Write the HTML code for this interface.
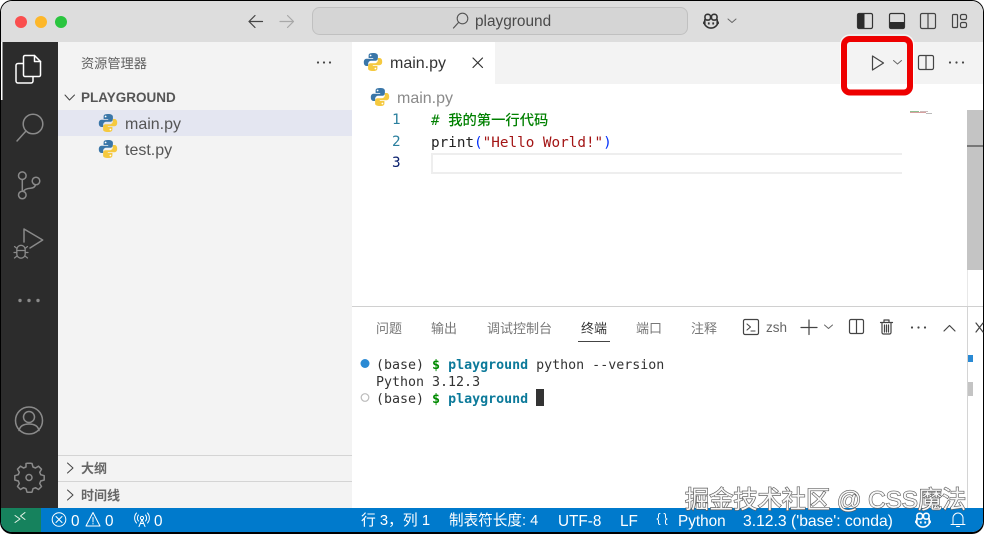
<!DOCTYPE html>
<html><head><meta charset="utf-8"><style>
*{box-sizing:border-box;margin:0;padding:0}
html,body{width:984px;height:534px;overflow:hidden;background:#fff}
body{position:relative;font-family:"Liberation Sans","Noto Sans CJK SC",sans-serif}
.a{position:absolute}
.t{position:absolute;white-space:nowrap;line-height:1}
svg{position:absolute;overflow:visible}
.m{font-family:"DejaVu Sans Mono","Noto Sans CJK SC",monospace}
.s{fill:none;stroke-linecap:round;stroke-linejoin:round}
</style></head><body>
<svg width="0" height="0" style="position:absolute"><defs>
<symbol id="py" viewBox="0 0 20 20">
<path fill="#3a76a8" d="M9.800 1C6 1 5.600 2.400 5.600 3.800V6h4.600v.8H3.600C2 6.800 .8 8 .8 10.300c0 2.400 1.100 3.700 2.700 3.700h1.700v-2.300c0-1.700 1.400-3 3-3h4.300c1.300 0 2.400-1.100 2.400-2.500V3.800C14.900 2 13.300 1 9.800 1Z"/>
<path fill="#f5c93f" d="M10.200 19c3.800 0 4.200-1.400 4.200-2.800V14H9.800v-.8h6.600c1.600 0 2.800-1.200 2.800-3.500 0-2.400-1.100-3.700-2.700-3.700h-1.700v2.300c0 1.700-1.400 3-3 3H7.500c-1.300 0-2.400 1.100-2.400 2.500v2.900C5.100 18 6.700 19 10.200 19Z"/>
<circle cx="7.600" cy="3.500" r=".9" fill="#fff"/><circle cx="12.400" cy="16.500" r=".9" fill="#fff"/>
</symbol>
<symbol id="cop" viewBox="0 0 18 18">
<rect x="2.200" y="1.500" width="6.300" height="6.500" rx="2.800" fill="none" stroke-width="1.800"/>
<rect x="9.500" y="1.500" width="6.300" height="6.500" rx="2.800" fill="none" stroke-width="1.800"/>
<path fill="none" stroke-width="1.800" d="M2 7v6c2 3 4.500 4 7 4s5-1 7-4V7M1 9.500v3M17 9.500v3"/>
<path fill="none" stroke-width="2" d="M6.500 10.500v2.500M11.500 10.500v2.500"/>
</symbol>
</defs></svg>

<!-- window -->
<div class="a" style="left:0;top:0;width:984px;height:534px;border-radius:12px;overflow:hidden;background:#000;">
 <div class="a" style="left:1px;top:1px;width:982px;height:531px;border-radius:11px;overflow:hidden;background:#fff">
  <div class="a" style="left:0;top:0;width:982px;height:41px;background:#dddddd"></div>
  <div class="a" style="left:0;top:41px;width:57px;height:467px;background:#2c2c2c"></div>
  <div class="a" style="left:57px;top:41px;width:294px;height:467px;background:#f3f3f3"></div>
  <div class="a" style="left:351px;top:41px;width:631px;height:42px;background:#f3f3f3"></div>
  <div class="a" style="left:351px;top:41px;width:143px;height:42px;background:#fff"></div>
  <div class="a" style="left:57px;top:109px;width:294px;height:26px;background:#e4e6f1"></div>
  <div class="a" style="left:57px;top:454px;width:294px;height:1px;background:#d4d4d4"></div>
  <div class="a" style="left:57px;top:480px;width:294px;height:1px;background:#d4d4d4"></div>
  <div class="a" style="left:351px;top:305px;width:631px;height:1px;background:#d0d0d0"></div>
  <!-- current line -->
  <div class="a" style="left:430px;top:152px;width:471px;height:21px;border:2px solid #eeeeee;border-right:0"></div>
  <!-- scrollbars -->
  <div class="a" style="left:966px;top:109px;width:16px;height:160px;background:#c4c4c4"></div>
  <div class="a" style="left:966px;top:144px;width:16px;height:2px;background:#777"></div>
  <div class="a" style="left:966px;top:269px;width:1px;height:36px;background:#e8e8e8"></div>
  <div class="a" style="left:966px;top:306px;width:1px;height:202px;background:#d4d4d4"></div>
  <div class="a" style="left:967px;top:354px;width:5px;height:7px;background:#2a8ad4"></div>
  <div class="a" style="left:967px;top:381px;width:5px;height:14px;background:#c4c4c4"></div>
  <!-- minimap -->
  <div class="a" style="left:909px;top:110px;width:9px;height:1px;background:#8fbf8f"></div>
  <div class="a" style="left:909px;top:111px;width:16px;height:1px;background:#d6a0a0"></div>
  <div class="a" style="left:919px;top:110px;width:8px;height:1px;background:#cbb"></div>
  <div class="a" style="left:925px;top:112px;width:6px;height:1px;background:#bbb"></div>
  <!-- status -->
  <div class="a" style="left:0;top:507px;width:982px;height:24px;background:#007acc"></div>
  <div class="a" style="left:0;top:507px;width:40px;height:24px;background:#16825d"></div>
 </div>
</div>

<!-- traffic lights -->
<div class="a" style="left:15px;top:16px;width:12px;height:12px;border-radius:50%;background:#fa4f4f"></div>
<div class="a" style="left:35px;top:16px;width:12px;height:12px;border-radius:50%;background:#fdb72a"></div>
<div class="a" style="left:55px;top:16px;width:12px;height:12px;border-radius:50%;background:#2ac53f"></div>

<svg style="left:0;top:0" width="984" height="534">
 <path class="s" stroke="#444" stroke-width="1.200" d="M249 21.500h13.500M255 15.500l-6 6 6 6"/>
 <path class="s" stroke="#a8a8a8" stroke-width="1.200" d="M280 21.500h13.500M287.500 15.500l6 6-6 6"/>
 <rect x="312.500" y="7.500" width="375" height="27" rx="7" fill="#d5d5d5" stroke="#c0c0c0"/>
 <circle cx="462.500" cy="18.500" r="5.300" fill="none" stroke="#555" stroke-width="1.100"/>
 <path class="s" stroke="#555" stroke-width="1.200" d="M458.500 22.500l-5 5.500"/>
 <use href="#cop" x="703" y="13" width="16" height="16" stroke="#333" fill="none"/>
 <path class="s" stroke="#666" d="M728 19l4 3.500 4-3.500"/>
 <rect x="857.500" y="13.500" width="15" height="15" rx="1.500" fill="none" stroke="#333" stroke-width="1.200"/>
 <path fill="#2b2b2b" d="M858 14h6.500v14H858z"/>
 <rect x="889.500" y="13.500" width="15" height="15" rx="1.500" fill="none" stroke="#333" stroke-width="1.200"/>
 <path fill="#2b2b2b" d="M890 22h14v6h-14z"/>
 <rect x="920.500" y="13.500" width="15" height="15" rx="1.500" fill="none" stroke="#444" stroke-width="1.200"/>
 <path stroke="#444" stroke-width="1.200" d="M928 13.500v15"/>
 <rect x="952.500" y="14.500" width="5" height="13" rx="1" fill="none" stroke="#444" stroke-width="1.200"/>
 <rect x="960.500" y="14.500" width="6" height="5" rx="1.500" fill="none" stroke="#444" stroke-width="1.200"/>
 <rect x="960.500" y="22.500" width="6" height="5" rx="1.500" fill="none" stroke="#444" stroke-width="1.200"/>

 <!-- activity: explorer -->
 <g class="s" stroke="#fff" stroke-width="1.500" fill="none">
  <path d="M24 63.500h-6a2 2 0 0 0-2 2v15.500a2 2 0 0 0 2 2h13a2 2 0 0 0 2-2v-4"/>
  <path d="M25 55.500h9.500l6 6v13.500a1.500 1.500 0 0 1-1.500 1.500H25a1.500 1.500 0 0 1-1.500-1.500V57a1.500 1.500 0 0 1 1.500-1.500Z" fill="#2c2c2c"/>
  <path d="M34.500 55.500v6h6"/>
 </g>
 <path fill="#fff" d="M1 42h1.500v58H1z"/>
 <g class="s" stroke="#8a8a8a" stroke-width="1.500" fill="none">
  <circle cx="33" cy="124" r="9.800"/>
  <path d="M26 131l-9 10"/>
  <!-- scm -->
  <circle cx="22.300" cy="175.700" r="3.800"/><circle cx="22.300" cy="195" r="3.800"/><circle cx="36" cy="181" r="3.800"/>
  <path d="M22.300 179.500v11.700M35.500 184.800c-.5 2.500-2.500 3.200-5 3.400-3 .2-5.800.6-7.200 3.200"/>
  <!-- debug -->
  <path d="M24 229v13M24 229l18.700 11-12.700 8"/>
  <path d="M16.800 249.500a4.200 4.200 0 0 1 8.400 0v4.500a4.200 4.200 0 0 1-8.400 0Z" stroke-width="1.300"/>
  <path d="M17 250.500h8M14.500 246.500l2.500 2M27.500 246.500l-2.500 2M14 252.500h3M28 252.500h-3M14.500 258l2.500-2M27.500 258l-2.500-2" stroke-width="1.200"/>
  <!-- account -->
  <circle cx="29" cy="420.500" r="13.500"/>
  <circle cx="29" cy="417" r="5.500"/>
  <path d="M19 430.500c1-4.500 4.500-6.500 10-6.500s9 2 10 6.500"/>
  <!-- gear -->
  <path d="M26 463.500l1-.2h4l1 .2 1 3.500 2.500 1 3-1.800 3 3-1.800 3 1 2.500 3.500 1v4.300l-3.500 1-1 2.500 1.800 3-3 3-3-1.800-2.500 1-1 3.500h-5l-1-3.500-2.500-1-3 1.800-3-3 1.800-3-1-2.500-3.500-1v-4.300l3.500-1 1-2.500-1.800-3 3-3 3 1.800 2.500-1Z"/>
  <circle cx="29" cy="477.500" r="3"/>
 </g>
 <g fill="#8a8a8a"><circle cx="20" cy="300.500" r="1.700"/><circle cx="29" cy="300.500" r="1.700"/><circle cx="38" cy="300.500" r="1.700"/></g>

 <!-- sidebar icons -->
 <g fill="#444"><circle cx="318" cy="62.500" r="1.100"/><circle cx="324" cy="62.500" r="1.100"/><circle cx="330" cy="62.500" r="1.100"/></g>
 <path class="s" stroke="#444" stroke-width="1" d="M65 95l4.500 5 5-5"/>
 <path class="s" stroke="#444" stroke-width="1" d="M67.500 463l5.500 5-5.500 5M67.500 490l5.500 5-5.500 5"/>
 <use href="#py" x="98" y="113" width="20" height="20"/>
 <use href="#py" x="98" y="139" width="20" height="20"/>
 <use href="#py" x="363" y="52" width="20" height="20"/>
 <use href="#py" x="370" y="87" width="20" height="20"/>
 <path class="s" stroke="#333" stroke-width="1.200" d="M473 58l9.500 9.500M482.500 58l-9.500 9.500"/>

 <!-- red box -->
 <rect x="840.500" y="35" width="73" height="62" rx="9" fill="none" stroke="#fff" stroke-width="1" opacity=".85"/>
 <rect x="844" y="39" width="66" height="53.500" rx="6" fill="none" stroke="#ee0000" stroke-width="6"/>
 <path class="s" stroke="#444" stroke-width="1.200" d="M872.500 56v14l11-7Z"/>
 <path class="s" stroke="#666" d="M893.500 60.500l4 3.500 4-3.500"/>
 <rect x="918.500" y="55.500" width="15" height="14" rx="1.500" fill="none" stroke="#444" stroke-width="1.200"/>
 <path stroke="#444" stroke-width="1.200" d="M926 55.500v14"/>
 <g fill="#444"><circle cx="950" cy="62.500" r="1.100"/><circle cx="956.500" cy="62.500" r="1.100"/><circle cx="963" cy="62.500" r="1.100"/></g>

 <path stroke="#444" d="M578 341.500h32"/>
 <rect x="743.500" y="319.500" width="15" height="15" rx="1.500" fill="none" stroke="#444" stroke-width="1.200"/>
 <path class="s" stroke="#444" stroke-width="1.100" d="M747 324l3.500 3-3.500 3M751 331h4"/>
 <path class="s" stroke="#444" stroke-width="1.200" d="M809 320v14.500M801 327.500h16"/>
 <path class="s" stroke="#666" d="M824.500 325l4 3.500 4-3.500"/>
 <rect x="849.500" y="319.500" width="14" height="14" rx="1.500" fill="none" stroke="#444" stroke-width="1.200"/>
 <path stroke="#444" stroke-width="1.200" d="M856.500 319.500v14"/>
 <path class="s" stroke="#444" stroke-width="1.200" fill="none" d="M880.500 322.500h12M882 322.500v10a1.500 1.500 0 0 0 1.500 1.500h6a1.500 1.500 0 0 0 1.500-1.500v-10M884 322v-2h5v2M884.500 325v7M886.500 325v7M888.500 325v7"/>
 <g fill="#444"><circle cx="912" cy="327.500" r="1.100"/><circle cx="918.500" cy="327.500" r="1.100"/><circle cx="925" cy="327.500" r="1.100"/></g>
 <path class="s" stroke="#444" stroke-width="1.200" d="M944 331l5.500-5.500 5.500 5.500"/>
 <path class="s" stroke="#444" stroke-width="1.200" d="M976 323l7 9M983 323l-7 9"/>
 <circle cx="365" cy="363.500" r="4.500" fill="#2a8ad4"/>
 <circle cx="365" cy="397.500" r="3.800" fill="none" stroke="#bbb" stroke-width="1.200"/>
 <rect x="536" y="389" width="8" height="17" fill="#333"/>

 <!-- status icons -->
 <path class="s" stroke="#e8f4ea" stroke-width="1" d="M15 515.500l5 3.500-5 3.500M25 512.500l-4.500 3.500 4.500 3.500"/>
 <g class="s" stroke="#fff" stroke-width="1" fill="none">
  <circle cx="59" cy="519.500" r="6.800"/>
  <path d="M56 516.500l6 6M62 516.500l-6 6"/>
  <path d="M93 512.500l7 13.500H86Z"/>
  <path d="M93 517.500v4.500M93 523.500v.5"/>
  <circle cx="142" cy="518" r="1.600"/>
  <path d="M139 526.500l3-7 3 7M140.200 523.500h3.600"/>
  <path d="M138.500 515c-1.500 1.500-1.500 4.500 0 6M145.500 515c1.500 1.500 1.500 4.500 0 6M136.500 513c-2.500 3-2.500 7 0 10M147.500 513c2.500 3 2.500 7 0 10"/>
  <path d="M660 513.500c-1.500 0-1.500 1-1.500 2.500s0 2.500-1.500 3c1.500.5 1.500 1.500 1.500 3s0 2.500 1.500 2.500M664 513.500c1.500 0 1.500 1 1.500 2.500s0 2.500 1.500 3c-1.500.5-1.500 1.500-1.500 3s0 2.500 1.500 2.500"/>
  <path d="M953 524v-6a5 5 0 0 1 10 0v6M951 524.500h14M956.500 526.500h3"/>
 </g>
 <use href="#cop" x="915" y="512" width="16" height="16" stroke="#fff" fill="none"/>
</svg>

<!-- sidebar text -->
<div class="t" style="left:81px;top:57px;font-size:13.200px;color:#616161">资源管理器</div>
<div class="t" style="left:81px;top:91px;font-size:13.500px;font-weight:700;color:#555">PLAYGROUND</div>
<div class="t" style="left:125px;top:117px;font-size:16px;color:#555">main.py</div>
<div class="t" style="left:125px;top:143px;font-size:16px;color:#555">test.py</div>
<div class="t" style="left:81px;top:462px;font-size:13px;font-weight:700;color:#666">大纲</div>
<div class="t" style="left:81px;top:489px;font-size:13px;font-weight:700;color:#666">时间线</div>

<div class="t" style="left:475px;top:14px;font-size:15.400px;color:#4a4a4a">playground</div>
<div class="t" style="left:390px;top:56px;font-size:16px;color:#333">main.py</div>
<div class="t" style="left:397px;top:91px;font-size:16px;color:#8a8a8a">main.py</div>

<!-- code -->
<div class="t m" style="left:392px;top:113px;font-size:14.300px;color:#2a7f9e">1</div>
<div class="t m" style="left:392px;top:135px;font-size:14.300px;color:#2a7f9e">2</div>
<div class="t m" style="left:392px;top:156px;font-size:14.300px;color:#0b216f">3</div>
<div class="t m" style="left:431px;top:113px;font-size:14.300px;color:#008000"># <span style="font-size:14.300px;font-family:'Noto Sans CJK SC',sans-serif;font-weight:500">我的第一行代码</span></div>
<div class="t m" style="left:431px;top:136px;font-size:14.300px;color:#222">print<span style="color:#0431fa">(</span><span style="color:#a31515">"Hello World!"</span><span style="color:#0431fa">)</span></div>

<!-- panel tabs -->
<div class="t" style="left:376px;top:322px;font-size:13px;color:#777">问题</div>
<div class="t" style="left:431px;top:322px;font-size:13px;color:#777">输出</div>
<div class="t" style="left:487px;top:322px;font-size:13px;color:#777">调试控制台</div>
<div class="t" style="left:581px;top:322px;font-size:13px;color:#333">终端</div>
<div class="t" style="left:636px;top:322px;font-size:13px;color:#777">端口</div>
<div class="t" style="left:691px;top:322px;font-size:13px;color:#777">注释</div>
<div class="t" style="left:766px;top:321px;font-size:13.500px;color:#666">zsh</div>

<!-- terminal -->
<div class="t m" style="left:376px;top:359px;font-size:13.300px;color:#333">(base) <b style="color:#008a00">$</b> <b style="color:#0c7a9a">playground</b> python --version</div>
<div class="t m" style="left:376px;top:376px;font-size:13.300px;color:#333">Python 3.12.3</div>
<div class="t m" style="left:376px;top:393px;font-size:13.300px;color:#333">(base) <b style="color:#008a00">$</b> <b style="color:#0c7a9a">playground</b></div>

<!-- status text -->
<div style="color:#fff;font-size:15.300px">
<div class="t" style="left:71px;top:514px">0</div>
<div class="t" style="left:105px;top:514px">0</div>
<div class="t" style="left:154px;top:514px">0</div>
<div class="t" style="left:361px;top:514px;font-size:14.800px">行 3，列 1</div>
<div class="t" style="left:449px;top:514px;font-size:14.600px">制表符长度: 4</div>
<div class="t" style="left:558px;top:514px">UTF-8</div>
<div class="t" style="left:620px;top:514px">LF</div>
<div class="t" style="left:678px;top:514px">Python</div>
<div class="t" style="left:743px;top:514px;font-size:15.700px">3.12.3 ('base': conda)</div>
</div>

<!-- watermark -->
<div class="t" style="left:685px;top:489px;font-size:24.200px;color:#f8f8f8;-webkit-text-stroke:1.300px #5c5c5c;paint-order:stroke fill">掘金技术社区 @ CSS魔法</div>
</body></html>
